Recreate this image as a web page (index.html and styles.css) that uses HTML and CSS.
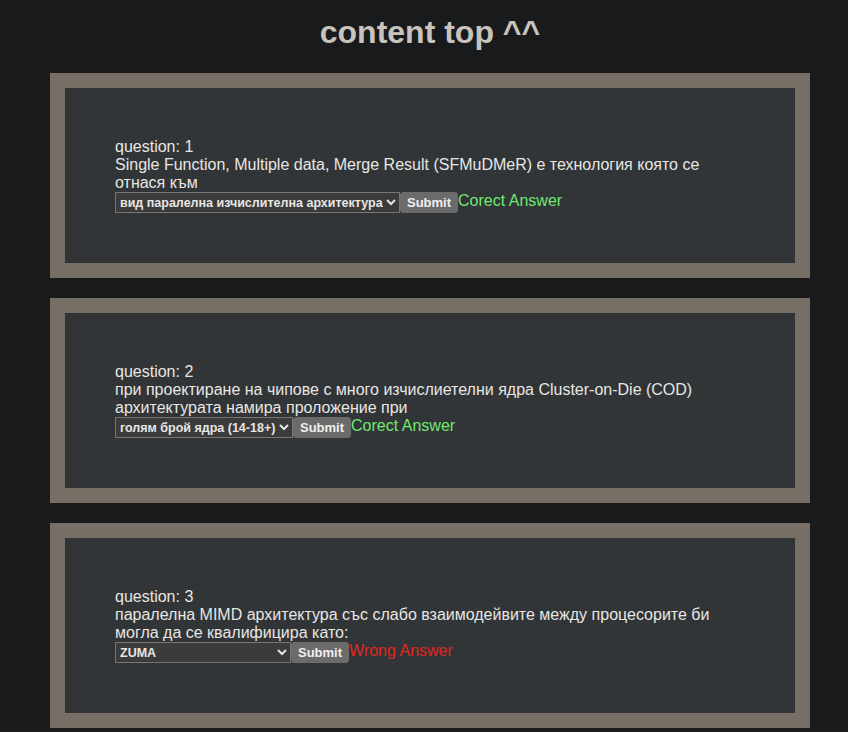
FILE: index.html
```html
<!DOCTYPE html>
<html>
<head>
<meta charset="utf-8">
<link rel="stylesheet" href="styles.css">
</head>
<body>
<div class="page">
<h1 class="title">content top ^^</h1>
<div class="list">
  <div class="card">
    <div class="inner">
      <div class="qnum">question: 1</div>
      <div class="qtext">Single Function, Multiple data, Merge Result (SFMuDMeR) е технология която се отнася към</div>
      <form class="row">
        <select class="sel">
          <option>вид паралелна изчислителна архитектура</option>
          <option>софтуер</option>
        </select><button type="button" class="btn">Submit</button><span class="ok">Corect Answer</span>
      </form>
    </div>
  </div>
  <div class="card">
    <div class="inner">
      <div class="qnum">question: 2</div>
      <div class="qtext">при проектиране на чипове с много изчислиетелни ядра Cluster-on-Die (COD) архитектурата намира проложение при</div>
      <form class="row">
        <select class="sel">
          <option>голям брой ядра (14-18+)</option>
          <option>малък брой ядра</option>
        </select><button type="button" class="btn">Submit</button><span class="ok">Corect Answer</span>
      </form>
    </div>
  </div>
  <div class="card">
    <div class="inner">
      <div class="qnum">question: 3</div>
      <div class="qtext">паралелна MIMD архитектура със слабо взаимодейвите между процесорите би могла да се квалифицира като:</div>
      <form class="row">
        <select class="sel">
          <option>ZUMA</option>
          <option>слабо свързана система</option>
        </select><button type="button" class="btn">Submit</button><span class="bad">Wrong Answer</span>
      </form>
    </div>
  </div>
</div>
</div>
</body>
</html>
```
FILE: styles.css
```css
html, body {
  margin: 0;
  background: #181a1b;
}
body {
  font-family: "Liberation Sans", Arial, sans-serif;
  color: #e8e6e3;
}
.page {
  margin-left: 50px;
  width: 760px;
  padding-top: 14px;
}
.title {
  margin: 0 0 22px 0;
  text-align: center;
  font-size: 32px;
  font-weight: bold;
  color: #c8c3bc;
  line-height: 37px;
}
.list {
  display: flex;
  flex-direction: column;
  gap: 20px;
}
.card {
  border: 15px solid #776f66;
  background: #313537;
}
.inner {
  padding: 50px;
  font-size: 16px;
  line-height: 18px;
}
.row {
  margin: 0;
  display: flex;
  align-items: flex-start;
  height: 21px;
}
.sel, .btn {
  color-scheme: dark;
  font-family: "Liberation Sans", Arial, sans-serif;
  font-size: 12.5px;
  font-weight: bold;
  margin: 0;
}
.sel {
  height: 21px;
  background: #3b3b3b;
  color: #e8e6e3;
  border: 1px solid #767676;
  border-radius: 0;
}
.btn {
  height: 21px;
  background: #6b6b6b;
  color: #f0f0f0;
  border: 1px solid #6b6b6b;
  border-radius: 3px;
  padding: 1px 6px;
  font-size: 13px;
}
.ok, .bad {
  margin-top: 0;
  line-height: 18px;
}
.ok { color: #6fe96f; }
.bad { color: #e1261f; }
```
